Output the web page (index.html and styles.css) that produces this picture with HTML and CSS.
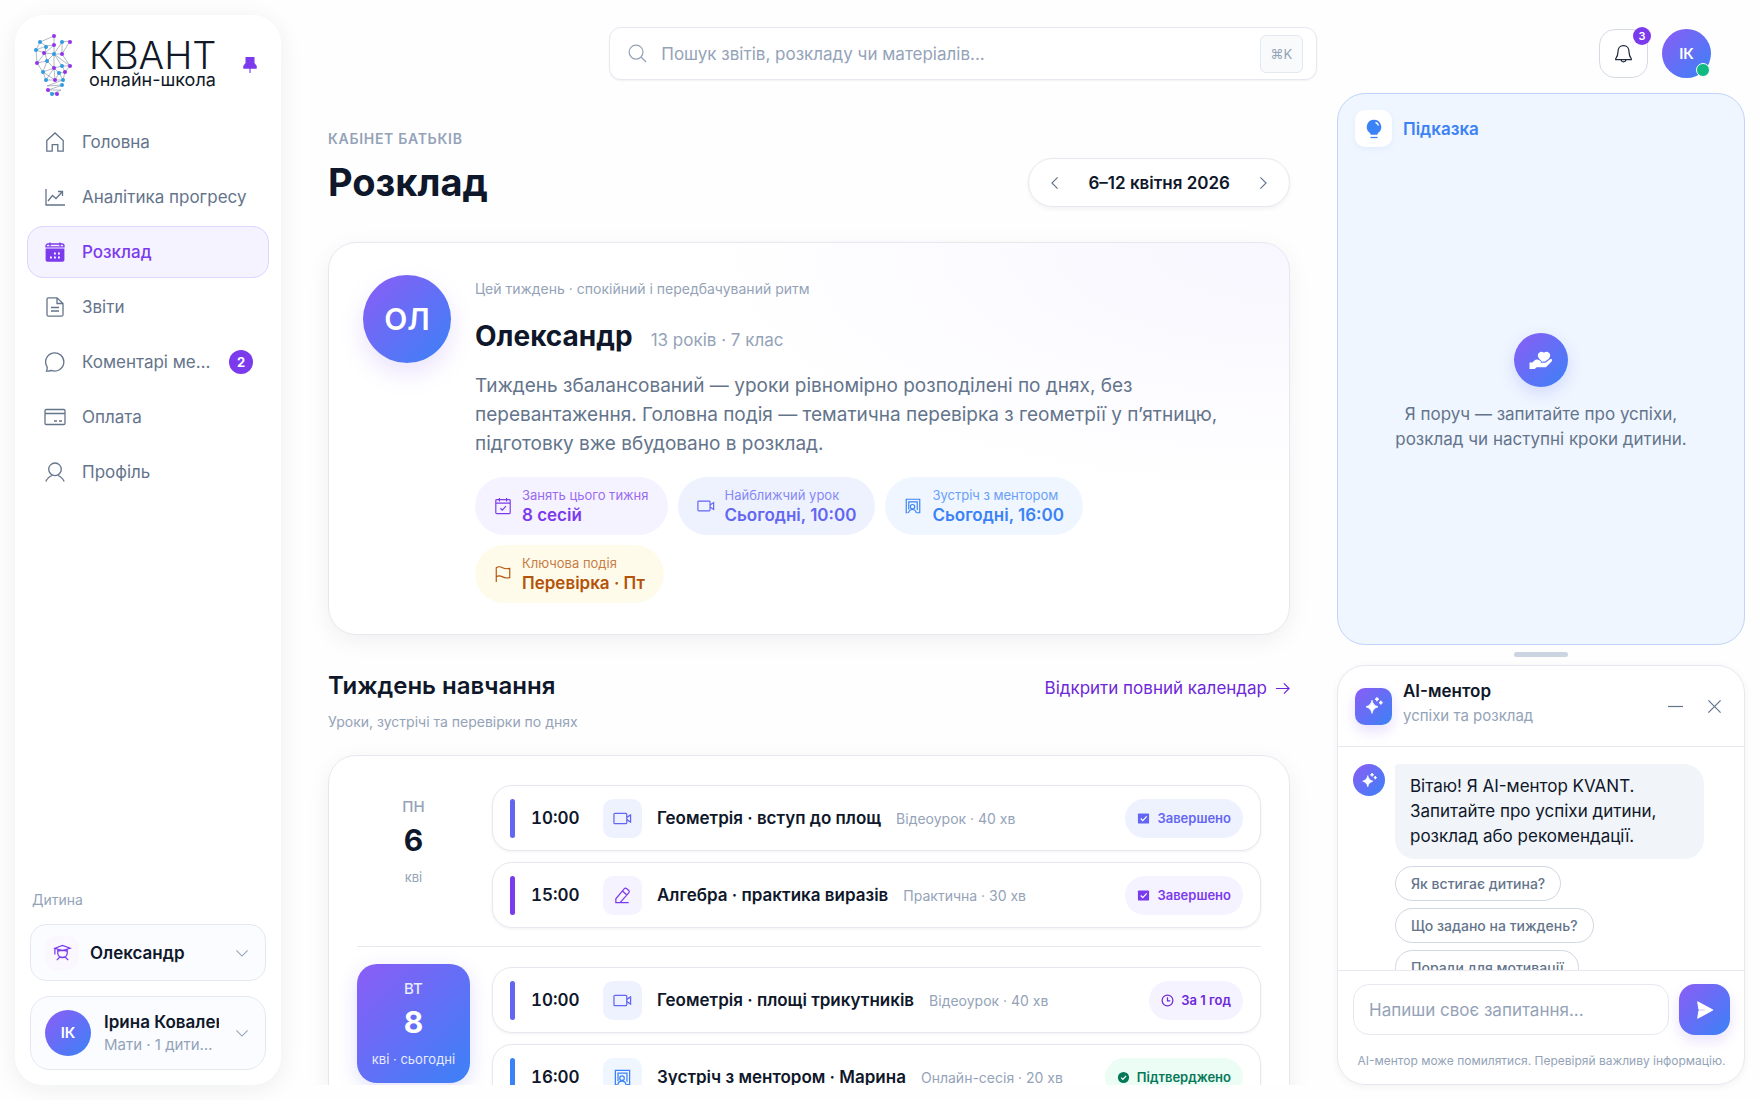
FILE: index.html
```html
<!DOCTYPE html>
<html lang="uk">
<head>
  <meta charset="UTF-8" />
  <meta name="viewport" content="width=device-width, initial-scale=1.0" />
  <title>Розклад — КВАНТ</title>
  <link rel="stylesheet" href="styles.css">
</head>
<body>
  <!-- shared icons -->
  <svg class="sprite" aria-hidden="true">
    <symbol id="i-video" viewBox="0 0 20 20"><rect x="1" y="4.500" width="13.500" height="11" rx="1"/><path d="M14.500 8.800 18.500 6.200v7.600l-4-2.600"/></symbol>
    <symbol id="i-mentor" viewBox="0 0 20 20"><path d="M4 17.500H2.500V2.500h15v15H14"/><path d="M5.300 14V5.500h9.400V14.500"/><circle cx="9.500" cy="10.700" r="2.400"/><path d="M5 17.800c.4-2.400 2-3.900 4.500-3.900s3.800 1.500 4.200 3.900"/></symbol>
    <symbol id="i-down" viewBox="0 0 16 16"><path d="m1.500 5 6.500 6.500L14.500 5"/></symbol>
    <symbol id="i-check-box" viewBox="0 0 14 14"><rect x="1" y="1.500" width="12" height="11" rx="1" fill="currentColor" stroke="none"/><path d="m4 7 2.200 2.300L10.500 4.800" stroke="#fff"/></symbol>
    <symbol id="i-spark" viewBox="0 0 20 20"><path fill="currentColor" stroke="currentColor" stroke-width=".8" stroke-linejoin="round" d="M8 4.200c.9 3.800 2.200 5.200 6 6.600-3.800 1.400-5.100 2.800-6 6.600-.9-3.800-2.200-5.200-6-6.600 3.800-1.400 5.100-2.800 6-6.600z"/><path d="M13 1.200v4M11 3.200h4M16.800 4.800v3.600M15 6.600h3.600" stroke-width="1.600"/></symbol>
  </svg>

  <div class="app">
    <aside class="sidebar">
      <div class="brand">
        <svg class="brand-mark" viewBox="0 0 40 64" aria-hidden="true">
          <path class="web" d="M20 3 6 9 2 17 3 30 9 39 12 47 21 47 29 47 31 39 36 33 28 33 20 35 13 28 11 20 12 13 20 12 20 3M6 9l6 4M2 17l10-4M2 17l9 3M11 20l-8 10M3 30l10-2M13 28l-4 11M11 20l9-8M20 12v23M20 21l8-12 8-1M20 21l8 0 8-13M28 9v12M20 21l16 12M20 21l8 12M20 21l-9-1M20 21l-7 7M20 35l-11 4M20 35l1 12M20 35l5 5 6-1M25 40l-4 7M25 40l4 7M12 47l8-12M28 21l8 12M28 33l3 6M9 39l12 8M13 53l16-6M13 53l15-1M14 57l15-5M14 57l13 0M18 61l9-4M18 61l6 0M14 57l4 4"/>
          <g class="blue-dots"><circle cx="6" cy="9" r="2"/><circle cx="2" cy="17" r="2"/><circle cx="12" cy="14" r="2"/><circle cx="20" cy="21" r="2"/><circle cx="28" cy="9" r="2"/><circle cx="13" cy="28" r="2"/><circle cx="28" cy="33" r="2"/><circle cx="9" cy="39" r="2"/><circle cx="25" cy="40" r="2"/><circle cx="12" cy="47" r="2"/><circle cx="29" cy="47" r="2"/><circle cx="28" cy="52" r="2"/><circle cx="18" cy="61" r="2"/></g>
          <g class="violet-dots"><circle cx="20" cy="3" r="2"/><circle cx="20" cy="12" r="2"/><circle cx="36" cy="9" r="2"/><circle cx="10" cy="20" r="2"/><circle cx="28" cy="21" r="2"/><circle cx="3" cy="30" r="2"/><circle cx="36" cy="33" r="2"/><circle cx="20" cy="35" r="2"/><circle cx="31" cy="39" r="2"/><circle cx="21" cy="47" r="2"/><circle cx="14" cy="57" r="2"/><circle cx="23" cy="61" r="2"/></g>
        </svg>
        <div class="brand-text">
          <span class="brand-name">КВАНТ</span>
          <span class="brand-sub">онлайн-школа</span>
        </div>
        <button class="pin" aria-label="Закріпити меню">
          <svg viewBox="0 0 16 18"><path fill="currentColor" d="M3.500.5h9v6.500l2.500 3v2.500H1V10l2.500-3z"/><path d="M8 12v6" stroke-width="1.300"/></svg>
        </button>
      </div>

      <nav class="nav">
        <a class="nav-item" href="#"><svg viewBox="0 0 20 20"><path d="M1.800 8.500 10 1l8.200 7.500v10.700h-5.400v-6.500H7.200v6.500H1.800z"/></svg><span>Головна</span></a>
        <a class="nav-item" href="#"><svg viewBox="0 0 20 20"><path d="M1 2v16h19M3 14l4.500-5.500 3.500 3L17 5M13 4.500h4.500V9"/></svg><span>Аналітика прогресу</span></a>
        <a class="nav-item active" href="#" aria-current="page"><svg viewBox="0 0 20 20"><path d="M1 4.800V4a2 2 0 0 1 2-2h14a2 2 0 0 1 2 2v.8z" fill="none"/><path fill="currentColor" stroke="none" d="M.6 6.500h18.800V18a1.800 1.800 0 0 1-1.800 1.800H2.400A1.800 1.800 0 0 1 .6 18z"/><path d="M5 .5v4M15 .5v4"/><path stroke="#fff" stroke-width="2" d="M9 11.500h1.800M13 11.500h1.800M5 15.500h1.800M9 15.500h1.800M13 15.500h1.800"/></svg><span>Розклад</span></a>
        <a class="nav-item" href="#"><svg viewBox="0 0 20 20"><path d="M12 .8H3.500a1.500 1.500 0 0 0-1.500 1.500v15.400a1.500 1.500 0 0 0 1.500 1.500h13a1.500 1.500 0 0 0 1.500-1.500V6.500zM12 .8v5.700h6M6 10.500h8M6 14h8"/></svg><span>Звіти</span></a>
        <a class="nav-item" href="#"><svg viewBox="0 0 20 20"><path d="M1.500 19c.8-1.800.9-3 .5-4.300A9.100 9.100 0 1 1 6.200 18.300C4.700 19 3 19.200 1.500 19z"/></svg><span>Коментарі ментора</span><b class="count">2</b></a>
        <a class="nav-item" href="#"><svg class="wide" viewBox="0 0 22 20"><rect x="1" y="2.500" width="20" height="15" rx="1.200"/><path d="M1 6.500h20M10 14h3M15 14h3"/></svg><span>Оплата</span></a>
        <a class="nav-item" href="#"><svg viewBox="0 0 20 20"><circle cx="10" cy="7.300" r="6.300"/><path d="M.8 19.500c1.500-3.400 3.700-5.100 6.200-6M19.200 19.500c-1.500-3.400-3.700-5.100-6.200-6"/></svg><span>Профіль</span></a>
      </nav>

      <div class="account">
        <span class="account-label">Дитина</span>
        <button class="child-switch">
          <span class="child-icon"><svg viewBox="0 0 20 20"><path d="m2 5.500 8-3 8 3-8 2.500zM2 5.500V12M5 7v3.500a5 5 0 0 0 10 0V7M5.500 8.500c2-1 7-1 9 0M7.500 14.500 4 18M12.500 14.500 16 18M7.500 14.500c1 .8 4 .8 5 0"/></svg></span>
          <span class="child-name">Олександр</span>
          <svg class="chevron"><use href="#i-down"/></svg>
        </button>
        <button class="user-card">
          <span class="avatar">ІК</span>
          <span class="user-text">
            <span class="user-name">Ірина Коваленко</span>
            <span class="user-role">Мати · 1 дитина</span>
          </span>
          <svg class="chevron"><use href="#i-down"/></svg>
        </button>
      </div>
    </aside>

    <div class="page">
      <header class="topbar">
        <label class="search">
          <svg viewBox="0 0 20 20"><circle cx="8.500" cy="8.500" r="7.300"/><path d="m14 14 5 5"/></svg>
          <input type="search" placeholder="Пошук звітів, розкладу чи матеріалів..." aria-label="Пошук" />
          <kbd>⌘K</kbd>
        </label>
        <div class="top-actions">
          <button class="bell" aria-label="Сповіщення">
            <svg viewBox="0 0 20 20"><path d="M10 1.200c-3.700 0-5.800 2.800-5.800 6.300 0 3.200-.6 5-2.400 7.500v1h16.400v-1c-1.800-2.500-2.400-4.300-2.400-7.500 0-3.500-2.100-6.300-5.800-6.300zM7.300 16.200a2.800 2.800 0 0 0 5.400 0"/></svg>
            <span class="bell-count">3</span>
          </button>
          <button class="avatar online" aria-label="Профіль">ІК</button>
        </div>
      </header>

      <main class="main">
        <div class="page-head">
          <div>
            <p class="eyebrow">Кабінет батьків</p>
            <h1>Розклад</h1>
          </div>
          <div class="week-picker">
            <button aria-label="Попередній тиждень"><svg viewBox="0 0 16 16"><path d="m11 1.500-6.500 6.500 6.500 6.500"/></svg></button>
            <span>6–12 квітня 2026</span>
            <button aria-label="Наступний тиждень"><svg viewBox="0 0 16 16"><path d="m5 1.500 6.500 6.500L5 14.500"/></svg></button>
          </div>
        </div>

        <section class="hero">
          <span class="hero-avatar">ОЛ</span>
          <div class="hero-body">
            <p class="hero-note">Цей тиждень · спокійний і передбачуваний ритм</p>
            <div class="hero-name">
              <h2>Олександр</h2>
              <span>13 років · 7 клас</span>
            </div>
            <p class="hero-text">Тиждень збалансований — уроки рівномірно розподілені по днях, без перевантаження. Головна подія — тематична перевірка з геометрії у пʼятницю, підготовку вже вбудовано в розклад.</p>
            <div class="facts">
              <div class="fact violet">
                <svg viewBox="0 0 20 20"><rect x="2" y="3" width="16" height="15.500" rx="1"/><path d="M2 6.800h16M6 1v4M14 1v4M7 12.500l2.200 2.200 4-4.500"/></svg>
                <div><span>Занять цього тижня</span><b>8 сесій</b></div>
              </div>
              <div class="fact indigo">
                <svg><use href="#i-video"/></svg>
                <div><span>Найближчий урок</span><b>Сьогодні, 10:00</b></div>
              </div>
              <div class="fact blue">
                <svg><use href="#i-mentor"/></svg>
                <div><span>Зустріч з ментором</span><b>Сьогодні, 16:00</b></div>
              </div>
              <div class="fact amber">
                <svg viewBox="0 0 20 20"><path d="M2.500 19V3c2-1.500 4.500-1.300 7 0s5 1.500 8 .8V14c-3 .8-5.500.5-8-.8s-5-1.500-7 0"/></svg>
                <div><span>Ключова подія</span><b>Перевірка · Пт</b></div>
              </div>
            </div>
          </div>
        </section>

        <div class="section-head">
          <div>
            <h3>Тиждень навчання</h3>
            <p>Уроки, зустрічі та перевірки по днях</p>
          </div>
          <a href="#">Відкрити повний календар <svg viewBox="0 0 16 16"><path d="M1 8h14M9.500 2.500 15 8l-5.500 5.500"/></svg></a>
        </div>

        <section class="week">
          <div class="day">
            <div class="date"><span class="date-name">ПН</span><b>6</b><span class="date-month">кві</span></div>
            <div class="lessons">
              <article class="lesson indigo">
                <time>10:00</time>
                <span class="lesson-icon"><svg><use href="#i-video"/></svg></span>
                <h4>Геометрія · вступ до площ</h4>
                <span class="lesson-meta">Відеоурок · 40 хв</span>
                <span class="status"><svg><use href="#i-check-box"/></svg>Завершено</span>
              </article>
              <article class="lesson violet">
                <time>15:00</time>
                <span class="lesson-icon"><svg viewBox="0 0 20 20"><path d="M3 17.500v-4L12 2.800a1.500 1.500 0 0 1 2.200-.1l2.400 2.100a1.500 1.500 0 0 1 .1 2.200L7.500 17.500zM10 5.200l4.600 4.200M7.500 17.500h9"/></svg></span>
                <h4>Алгебра · практика виразів</h4>
                <span class="lesson-meta">Практична · 30 хв</span>
                <span class="status"><svg><use href="#i-check-box"/></svg>Завершено</span>
              </article>
            </div>
          </div>
          <div class="day today">
            <div class="date"><span class="date-name">ВТ</span><b>8</b><span class="date-month">кві · сьогодні</span></div>
            <div class="lessons">
              <article class="lesson indigo">
                <time>10:00</time>
                <span class="lesson-icon"><svg><use href="#i-video"/></svg></span>
                <h4>Геометрія · площі трикутників</h4>
                <span class="lesson-meta">Відеоурок · 40 хв</span>
                <span class="status soon"><svg viewBox="0 0 14 14"><circle cx="7" cy="7" r="5.800"/><path d="M7 3.500V7.500h3"/></svg>За 1 год</span>
              </article>
              <article class="lesson blue">
                <time>16:00</time>
                <span class="lesson-icon"><svg><use href="#i-mentor"/></svg></span>
                <h4>Зустріч з ментором · Марина</h4>
                <span class="lesson-meta">Онлайн-сесія · 20 хв</span>
                <span class="status confirmed"><svg viewBox="0 0 14 14"><circle cx="7" cy="7" r="6" fill="currentColor" stroke="none"/><path d="m4.500 7.200 1.800 1.800L9.700 5.400" stroke="#fff"/></svg>Підтверджено</span>
              </article>
            </div>
          </div>
        </section>
      </main>

      <aside class="side">
        <section class="hint">
          <div class="hint-head">
            <span class="hint-icon"><svg viewBox="0 0 20 20"><path fill="currentColor" stroke="none" d="M10 .8a7.200 7.200 0 0 0-4.300 13c.7.600.9 1.300.9 2h6.800c0-.7.2-1.400.9-2A7.200 7.200 0 0 0 10 .8z"/><path d="M6.500 18.500h7" stroke-width="1.300"/><path d="M11.500 3.500c1.500.4 2.600 1.500 3 3" stroke="#fff" stroke-width="1.300"/></svg></span>
            <h3>Підказка</h3>
          </div>
          <div class="hint-body">
            <span class="hint-hand"><svg viewBox="0 0 26 24"><path fill="currentColor" stroke="none" d="M15.800 14.500c-3-2-6-4.400-6-7.500A3.600 3.600 0 0 1 16 4.800 3.600 3.600 0 0 1 22.200 7c0 1.500-.7 2.900-1.700 4.100l-3.500 2.500h-3.500c-1.200 0-1.200 1.200 0 1.200h3.800l4.500-3.300c2-1.200 3.200.5 1.800 1.900l-5 5c-.7.700-1.300.9-2.200.9H8.500L6.800 21H1.500v-6.500h2.800l2.200-2c.9-.8 1.900-1.200 3-1z"/></svg></span>
            <p>Я поруч — запитайте про успіхи, розклад чи наступні кроки дитини.</p>
          </div>
        </section>

        <div class="handle"></div>

        <section class="chat">
          <header class="chat-head">
            <span class="chat-logo"><svg><use href="#i-spark"/></svg></span>
            <div>
              <h3>AI-ментор</h3>
              <p>успіхи та розклад</p>
            </div>
            <button aria-label="Згорнути"><svg viewBox="0 0 16 16"><path d="M0 8h16"/></svg></button>
            <button aria-label="Закрити"><svg viewBox="0 0 16 16"><path d="m1.500 1.500 13 13M14.500 1.500l-13 13"/></svg></button>
          </header>
          <div class="chat-log">
            <span class="bot"><svg><use href="#i-spark"/></svg></span>
            <div class="chat-col">
              <p class="bubble">Вітаю! Я AI-ментор KVANT. Запитайте про успіхи дитини, розклад або рекомендації.</p>
              <button class="prompt">Як встигає дитина?</button>
              <button class="prompt">Що задано на тиждень?</button>
              <button class="prompt">Поради для мотивації</button>
            </div>
          </div>
          <form class="chat-form">
            <div class="chat-row">
              <input type="text" placeholder="Напиши своє запитання..." aria-label="Повідомлення" />
              <button type="button" aria-label="Надіслати"><svg viewBox="0 0 20 20"><path fill="currentColor" stroke="currentColor" stroke-linejoin="round" d="M2 1 18.500 10 2 19l1.300-8.200h7.200V9.200H3.300z"/></svg></button>
            </div>
            <p>AI-ментор може помилятися. Перевіряй важливу інформацію.</p>
          </form>
        </section>
      </aside>
    </div>
  </div>
</body>
</html>
```
FILE: styles.css
```css
:root {
  --ink: #0f172a;
  --text: #64748b;
  --muted: #94a3b8;
  --line: #e5e9ef;
  --violet: #7c3aed;
  --indigo: #6366f1;
  --blue: #3b82f6;
  --grad: linear-gradient(135deg, #8b5cf6, #3b82f6);
}
* {
  box-sizing: border-box;
}
body {
  margin: 0;
  font-family: Inter, "Noto Sans", sans-serif;
  font-size: 16px;
  color: var(--ink);
  background: #fefefe;
}
h1, h2, h3, h4, p {
  margin: 0;
}
button, input, kbd {
  font: inherit;
  color: inherit;
}
button {
  padding: 0;
  border: none;
  background: none;
  cursor: pointer;
}
a {
  text-decoration: none;
}
svg {
  flex-shrink: 0;
  fill: none;
  stroke: currentColor;
  stroke-width: 1.3;
}
.sprite {
  display: none;
}
.app {
  display: flex;
  height: 100vh;
  padding: 0 15px 15px;
  overflow: hidden;
}

/* sidebar */
.sidebar {
  display: flex;
  flex-direction: column;
  flex: 0 0 266px;
  min-width: 0;
  margin-top: 15px;
  padding: 18px 12px 15px;
  border-radius: 28px;
  background: #fff;
  box-shadow: 0 4px 24px rgba(15, 23, 42, 0.07);
}
.brand {
  display: flex;
  align-items: center;
  padding: 0 12px 0 7px;
  height: 64px;
}
.brand-mark {
  width: 40px;
  height: 64px;
}
.brand-mark .web {
  stroke: #64748b;
  stroke-width: 0.5;
}
.brand-mark circle {
  stroke: none;
}
.blue-dots {
  fill: #2f9be0;
}
.violet-dots {
  fill: #9333ea;
}
.brand-text {
  display: flex;
  flex-direction: column;
  margin: 0 0 2px 15px;
  color: #111827;
}
.brand-name {
  font-size: 38px;
  line-height: 32px;
  font-weight: 300;
}
.brand-sub {
  font-size: 18px;
  line-height: 18px;
}
.pin {
  margin-left: auto;
  color: var(--violet);
}
.pin svg {
  display: block;
  width: 14px;
  height: 18px;
}
.nav {
  display: flex;
  flex-direction: column;
  gap: 3px;
  margin-top: 19px;
}
.nav-item {
  display: flex;
  align-items: center;
  gap: 17px;
  height: 52px;
  padding: 0 15px 0 17px;
  border: 1px solid transparent;
  border-radius: 16px;
  color: var(--text);
  font-size: 17px;
}
.nav-item span {
  overflow: hidden;
  line-height: 24px;
  white-space: nowrap;
  text-overflow: ellipsis;
}
.nav-item svg {
  width: 20px;
  height: 20px;
}
.nav-item .wide {
  width: 22px;
  margin: 0 -1px;
}
.nav-item.active {
  border-color: #ddd6fe;
  background: #f5f3ff;
  color: var(--violet);
  font-weight: 500;
}
.count {
  flex: 0 0 24px;
  margin-left: auto;
  border-radius: 50%;
  background: var(--violet);
  color: #fff;
  font-size: 13px;
  line-height: 24px;
  text-align: center;
}
.account {
  display: flex;
  flex-direction: column;
  margin: auto 3px 0;
}
.account-label {
  padding-left: 2px;
  color: var(--muted);
  font-size: 14px;
  line-height: 20px;
}
.child-switch,
.user-card {
  display: flex;
  align-items: center;
  padding: 0 16px 0 14px;
  border: 1px solid var(--line);
  border-radius: 16px;
  background: #fafcff;
  text-align: left;
}
.child-switch {
  height: 57px;
  margin: 14px 0 15px;
}
.child-icon {
  display: grid;
  place-items: center;
  width: 34px;
  height: 34px;
  border-radius: 12px;
  background: #faf7ff;
  color: var(--violet);
}
.child-icon svg {
  width: 19px;
  height: 19px;
}
.child-name {
  margin: 0 auto 0 11px;
  font-size: 17px;
  font-weight: 600;
}
.chevron {
  width: 14px;
  height: 14px;
  color: var(--muted);
}
.user-card {
  height: 74px;
  border-radius: 20px;
}
.avatar {
  flex-shrink: 0;
  width: 46px;
  height: 46px;
  border-radius: 50%;
  background: var(--grad);
  color: #fff;
  font-size: 15px;
  font-weight: 600;
  line-height: 46px;
  text-align: center;
}
.user-text {
  flex: 1;
  min-width: 0;
  margin: 0 16px 0 13px;
}
.user-name,
.user-role {
  display: block;
  overflow: hidden;
  white-space: nowrap;
}
.user-name {
  font-size: 17px;
  line-height: 24px;
  font-weight: 600;
}
.user-role {
  padding-right: 5px;
  color: var(--muted);
  font-size: 15px;
  line-height: 22px;
  text-overflow: ellipsis;
}

/* page */
.page {
  display: grid;
  grid-template: 93px minmax(0, 1fr) / minmax(0, 1fr) 408px;
  flex: 1;
  min-width: 0;
}
.topbar {
  grid-column: 1 / -1;
  display: grid;
  grid-template-columns: 5fr minmax(0, 708px) 7fr;
  align-items: center;
  padding: 14px 34px 0 47px;
}
.search {
  grid-column: 2;
  display: flex;
  align-items: center;
  height: 53px;
  padding: 0 13px 0 18px;
  border: 1px solid var(--line);
  border-radius: 12px;
  background: #fff;
  box-shadow: 0 1px 2px rgba(15, 23, 42, 0.05);
}
.search svg {
  width: 19px;
  height: 19px;
  color: var(--muted);
}
.search input {
  flex: 1;
  min-width: 0;
  padding: 0 14px;
  border: none;
  outline: none;
  background: none;
  font-size: 17px;
}
input::placeholder {
  color: var(--muted);
  opacity: 1;
}
.search kbd {
  padding: 0 10px;
  border: 1px solid var(--line);
  border-radius: 6px;
  background: #f8fafc;
  color: var(--muted);
  font-size: 13px;
  line-height: 36px;
}
.top-actions {
  display: flex;
  gap: 14px;
  justify-content: flex-end;
}
.bell {
  position: relative;
  display: grid;
  place-items: center;
  width: 49px;
  height: 49px;
  border: 1px solid #d5dbe5;
  border-radius: 16px;
  background: #fff;
  color: #1e293b;
}
.bell svg {
  width: 19px;
  height: 20px;
}
.bell-count {
  position: absolute;
  top: -3px;
  right: -4px;
  width: 18px;
  border-radius: 50%;
  background: var(--violet);
  color: #fff;
  font-size: 11px;
  font-weight: 600;
  line-height: 18px;
}
.avatar.online {
  position: relative;
  width: 49px;
  height: 49px;
  line-height: 49px;
}
.online::after {
  content: "";
  position: absolute;
  right: 1px;
  bottom: 1px;
  width: 12px;
  height: 12px;
  border: 1px solid #fff;
  border-radius: 50%;
  background: #10b981;
}
.main {
  overflow: hidden;
  padding: 36px 47px 0;
}
.page-head {
  display: flex;
  align-items: flex-end;
  justify-content: space-between;
  margin-bottom: 35px;
}
.eyebrow {
  margin-bottom: 9px;
  color: var(--muted);
  font-size: 14px;
  line-height: 20px;
  font-weight: 600;
  letter-spacing: 0.05em;
  text-transform: uppercase;
}
h1 {
  font-size: 38px;
  line-height: 49px;
  font-weight: 700;
}
.week-picker {
  display: flex;
  align-items: center;
  height: 49px;
  padding: 0 11px;
  border: 1px solid var(--line);
  border-radius: 25px;
  background: #fff;
  box-shadow: 0 2px 4px rgba(15, 23, 42, 0.05);
}
.week-picker span {
  padding: 0 18px;
  font-size: 17px;
  font-weight: 600;
}
.week-picker button {
  width: 30px;
  height: 30px;
  color: var(--text);
}
.week-picker svg {
  display: block;
  width: 14px;
  height: 14px;
  margin: 0 auto;
}
.hero {
  display: flex;
  gap: 24px;
  padding: 32px 34px 31px;
  border: 1px solid var(--line);
  border-radius: 28px;
  background: radial-gradient(ellipse 600px 260px at 100% 0, #f8f6ff, rgba(255, 255, 255, 0) 100%), #fff;
  box-shadow: 0 6px 24px rgba(15, 23, 42, 0.06);
}
.hero-avatar {
  flex: 0 0 88px;
  height: 88px;
  border-radius: 50%;
  background: var(--grad);
  box-shadow: 0 10px 24px rgba(139, 92, 246, 0.18);
  color: #fff;
  font-size: 30px;
  font-weight: 600;
  line-height: 88px;
  text-align: center;
}
.hero-body {
  flex: 1;
  padding-top: 4px;
}
.hero-note {
  color: var(--muted);
  font-size: 14px;
  line-height: 20px;
}
.hero-name {
  display: flex;
  align-items: baseline;
  gap: 18px;
  margin: 19px 0 17px;
}
.hero-name h2 {
  font-size: 28px;
  line-height: 36px;
  font-weight: 700;
}
.hero-name span {
  color: var(--muted);
  font-size: 17px;
}
.hero-text {
  color: var(--text);
  font-size: 19px;
  line-height: 29px;
}
.facts {
  display: flex;
  flex-wrap: wrap;
  gap: 10px;
  margin-top: 19px;
}
.fact {
  display: flex;
  align-items: center;
  gap: 10px;
  height: 58px;
  padding: 0 19px;
  border-radius: 29px;
  background: var(--soft);
  color: var(--tone);
}
.fact svg {
  width: 18px;
  height: 18px;
}
.fact span,
.fact b {
  display: block;
}
.fact span {
  font-size: 13px;
  line-height: 18px;
  opacity: 0.75;
}
.fact b {
  font-size: 17px;
  line-height: 22px;
  font-weight: 600;
}
.violet {
  --tone: var(--violet);
  --soft: #f5f3ff;
}
.indigo {
  --tone: var(--indigo);
  --soft: #eef2ff;
}
.blue {
  --tone: #3b82f6;
  --soft: #eff6ff;
}
.amber {
  --tone: #b45309;
  --soft: #fffbeb;
}
.section-head {
  display: flex;
  justify-content: space-between;
  margin: 35px 0 23px;
}
.section-head h3 {
  font-size: 24px;
  line-height: 32px;
  font-weight: 600;
}
.section-head p {
  margin-top: 10px;
  color: var(--muted);
  font-size: 14px;
  line-height: 20px;
}
.section-head a {
  display: flex;
  align-items: center;
  gap: 8px;
  height: 36px;
  color: #6d28d9;
  font-size: 17px;
}
.section-head svg {
  width: 15px;
  height: 15px;
}
.week {
  padding: 26px 28px;
  border: 1px solid var(--line);
  border-radius: 28px;
  background: #fff;
  box-shadow: 0 6px 24px rgba(15, 23, 42, 0.06);
}
.day {
  display: flex;
  align-items: flex-start;
  gap: 22px;
  padding-bottom: 18px;
}
.day + .day {
  padding-top: 17px;
  border-top: 1px solid var(--line);
}
.date {
  display: flex;
  flex-direction: column;
  flex: 0 0 113px;
  padding: 15px 0;
  border-radius: 20px;
  color: var(--muted);
  text-align: center;
}
.date-name {
  font-size: 15px;
  line-height: 20px;
  font-weight: 500;
}
.date b {
  margin: 3px 0 8px;
  color: var(--ink);
  font-size: 30px;
  line-height: 40px;
}
.date-month {
  font-size: 13px;
  line-height: 18px;
}
.today .date {
  background: var(--grad);
  box-shadow: 0 6px 20px rgba(99, 102, 241, 0.2);
  color: #e8eaff;
}
.today .date b {
  color: #fff;
}
.lessons {
  display: flex;
  flex-direction: column;
  gap: 11px;
  flex: 1;
  min-width: 0;
  padding-top: 3px;
}
.lesson {
  display: flex;
  align-items: center;
  height: 66px;
  padding: 0 17px;
  border: 1px solid var(--line);
  border-radius: 20px;
  background: #fff;
  box-shadow: 0 1px 3px rgba(15, 23, 42, 0.06);
  white-space: nowrap;
}
.lesson::before {
  content: "";
  width: 5px;
  height: 39px;
  margin-right: 16px;
  border-radius: 3px;
  background: var(--tone);
}
.lesson time {
  flex: 0 0 72px;
  font-size: 17px;
  font-weight: 600;
  font-variant-numeric: tabular-nums;
}
.lesson-icon {
  display: grid;
  place-items: center;
  width: 39px;
  height: 39px;
  margin-right: 15px;
  border-radius: 10px;
  background: var(--soft);
  color: var(--tone);
}
.lesson-icon svg {
  width: 19px;
  height: 19px;
}
.lesson h4 {
  font-size: 17px;
  font-weight: 600;
}
.lesson-meta {
  margin-left: 15px;
  color: var(--muted);
  font-size: 14px;
}
.status {
  display: flex;
  align-items: center;
  gap: 7px;
  height: 39px;
  margin-left: auto;
  padding: 0 12px;
  border-radius: 20px;
  background: var(--soft);
  color: var(--tone);
  font-size: 13px;
  font-weight: 600;
}
.status svg {
  width: 13px;
  height: 13px;
}
.status.soon {
  background: #f5f3ff;
  color: #6d28d9;
}
.status.confirmed {
  background: #ecfdf5;
  color: #047857;
}

/* right column */
.side {
  display: flex;
  flex-direction: column;
  min-height: 0;
}
.hint {
  display: flex;
  flex-direction: column;
  flex: 1;
  padding: 16px 17px;
  border: 1px solid #bfd4f8;
  border-radius: 28px;
  background: #eff6ff;
}
.hint-head {
  display: flex;
  align-items: center;
  gap: 11px;
  color: var(--blue);
}
.hint-head h3 {
  font-size: 17px;
  font-weight: 600;
}
.hint-icon,
.chat-logo {
  display: grid;
  place-items: center;
  width: 37px;
  height: 37px;
  border-radius: 10px;
  background: #fff;
  box-shadow: 0 2px 6px rgba(59, 130, 246, 0.08);
}
.hint-icon svg,
.chat-logo svg {
  width: 20px;
  height: 20px;
}
.hint-body {
  display: flex;
  flex: 1;
  flex-direction: column;
  align-items: center;
  justify-content: center;
  gap: 15px;
  padding-top: 10px;
  color: var(--text);
  font-size: 17px;
  line-height: 25px;
  text-align: center;
}
.hint-body p {
  max-width: 300px;
}
.hint-hand {
  display: grid;
  place-items: center;
  width: 54px;
  height: 54px;
  border-radius: 50%;
  background: var(--grad);
  box-shadow: 0 6px 16px rgba(99, 102, 241, 0.2);
  color: #fff;
}
.hint-hand svg {
  width: 26px;
  height: 24px;
}
.handle {
  width: 54px;
  height: 5px;
  margin: 7px auto 8px;
  border-radius: 3px;
  background: #cbd5e1;
}
.chat {
  display: flex;
  flex-direction: column;
  height: 420px;
  border: 1px solid var(--line);
  border-radius: 28px;
  background: #fff;
  box-shadow: 0 2px 8px rgba(15, 23, 42, 0.05);
}
.chat-head {
  display: flex;
  align-items: center;
  height: 81px;
  padding: 0 22px 0 17px;
  border-bottom: 1px solid var(--line);
}
.chat-logo {
  background: var(--grad);
  box-shadow: 0 6px 14px rgba(139, 92, 246, 0.2);
  color: #fff;
}
.chat-head div {
  margin: 0 auto 6px 11px;
}
.chat-head h3 {
  font-size: 17px;
  line-height: 26px;
  font-weight: 600;
}
.chat-head p {
  color: var(--muted);
  font-size: 15px;
  line-height: 24px;
}
.chat-head button {
  margin-left: 24px;
  color: var(--text);
}
.chat-head button svg {
  display: block;
  width: 15px;
  height: 15px;
}
.chat-log {
  display: flex;
  flex: 1;
  gap: 10px;
  min-height: 0;
  padding: 17px 40px 0 15px;
  overflow: hidden;
}
.bot {
  display: grid;
  place-items: center;
  flex: 0 0 32px;
  height: 32px;
  border-radius: 50%;
  background: var(--grad);
  color: #fff;
}
.bot svg {
  width: 17px;
  height: 17px;
}
.chat-col {
  display: flex;
  flex: 1;
  flex-direction: column;
  align-items: flex-start;
  gap: 7px;
}
.bubble {
  width: 100%;
  padding: 10px 15px;
  border-radius: 4px 20px 20px 20px;
  background: #f1f5f9;
  font-size: 17px;
  line-height: 25px;
}
.prompt {
  flex: 0 0 35px;
  padding: 0 15px;
  border: 1px solid #d0d7e2;
  border-radius: 18px;
  background: #fff;
  color: var(--text);
  font-size: 14px;
  font-weight: 500;
}
.chat-form {
  padding: 13px 14px 13px 15px;
  border-top: 1px solid var(--line);
}
.chat-row {
  display: flex;
  gap: 10px;
}
.chat-row input {
  flex: 1;
  min-width: 0;
  height: 51px;
  padding: 0 15px;
  border: 1px solid var(--line);
  border-radius: 16px;
  font-size: 17px;
}
.chat-row button {
  display: grid;
  place-items: center;
  width: 51px;
  height: 51px;
  border-radius: 16px;
  background: var(--grad);
  box-shadow: 0 6px 14px rgba(139, 92, 246, 0.18);
  color: #fff;
}
.chat-row svg {
  width: 18px;
  height: 20px;
}
.chat-form p {
  margin-top: 16px;
  color: var(--muted);
  font-size: 12px;
  line-height: 20px;
  text-align: center;
  white-space: nowrap;
}
```
